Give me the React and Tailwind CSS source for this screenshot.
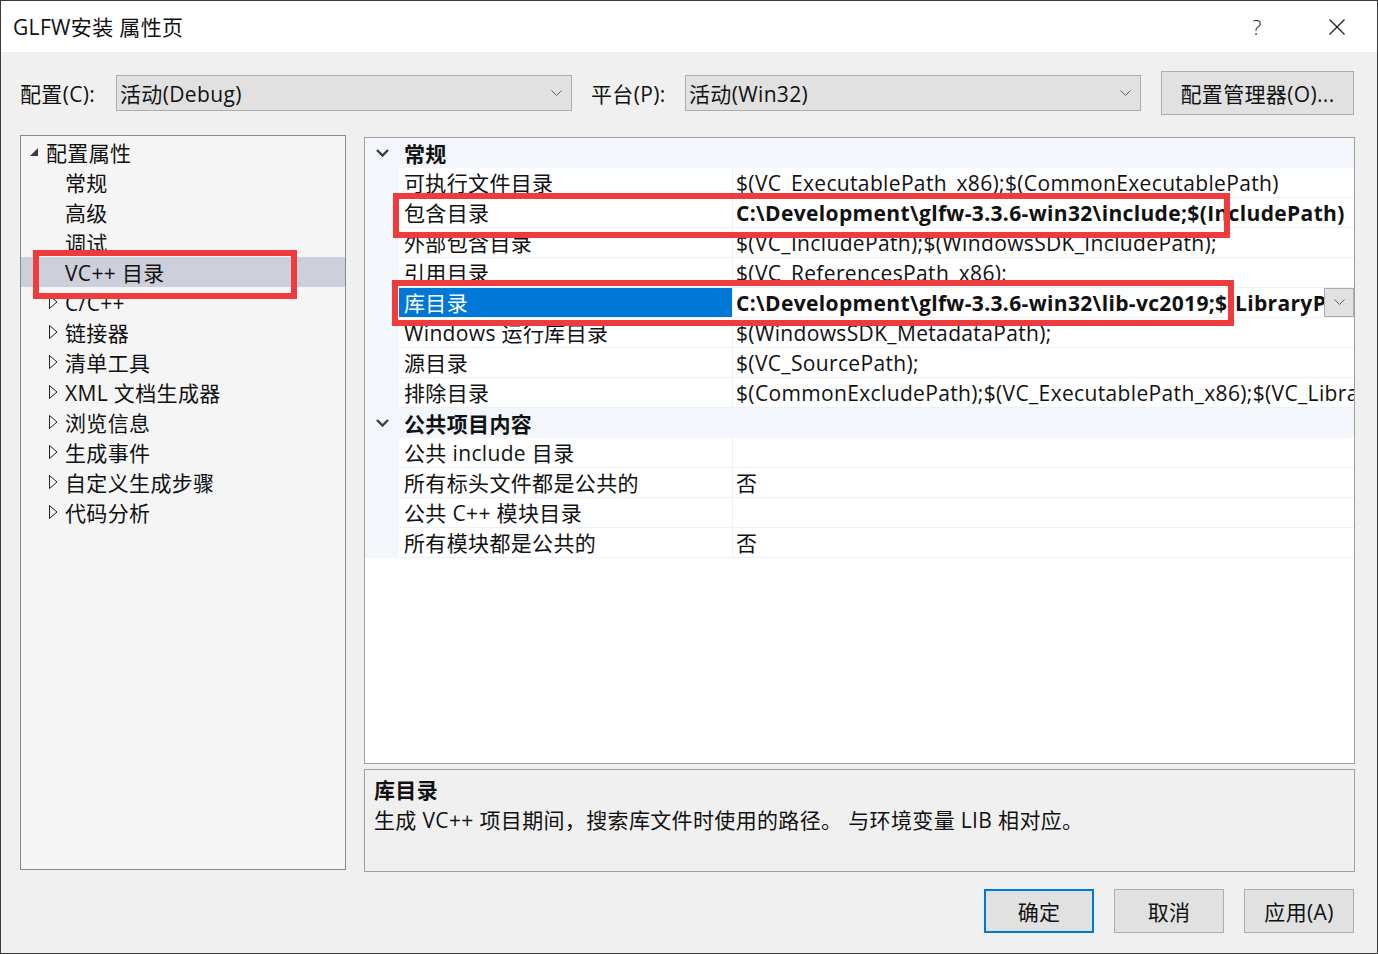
import React from 'react';

const treeItems = [
  { label: '配置属性', level: 0, icon: 'open' },
  { label: '常规', level: 1 },
  { label: '高级', level: 1 },
  { label: '调试', level: 1 },
  { label: 'VC++ 目录', level: 1, selected: true },
  { label: 'C/C++', level: 1, icon: 'closed' },
  { label: '链接器', level: 1, icon: 'closed' },
  { label: '清单工具', level: 1, icon: 'closed' },
  { label: 'XML 文档生成器', level: 1, icon: 'closed' },
  { label: '浏览信息', level: 1, icon: 'closed' },
  { label: '生成事件', level: 1, icon: 'closed' },
  { label: '自定义生成步骤', level: 1, icon: 'closed' },
  { label: '代码分析', level: 1, icon: 'closed' },
];

const sections = [
  {
    title: '常规',
    rows: [
      { name: '可执行文件目录', value: '$(VC_ExecutablePath_x86);$(CommonExecutablePath)' },
      { name: '包含目录', value: 'C:\\Development\\glfw-3.3.6-win32\\include;$(IncludePath)', bold: true },
      { name: '外部包含目录', value: '$(VC_IncludePath);$(WindowsSDK_IncludePath);' },
      { name: '引用目录', value: '$(VC_ReferencesPath_x86);' },
      { name: '库目录', value: 'C:\\Development\\glfw-3.3.6-win32\\lib-vc2019;$(LibraryPath)', bold: true, selected: true },
      { name: 'Windows 运行库目录', value: '$(WindowsSDK_MetadataPath);' },
      { name: '源目录', value: '$(VC_SourcePath);' },
      { name: '排除目录', value: '$(CommonExcludePath);$(VC_ExecutablePath_x86);$(VC_LibraryPath_x86)' },
    ],
  },
  {
    title: '公共项目内容',
    rows: [
      { name: '公共 include 目录', value: '' },
      { name: '所有标头文件都是公共的', value: '否' },
      { name: '公共 C++ 模块目录', value: '' },
      { name: '所有模块都是公共的', value: '否' },
    ],
  },
];

const SmallChevron = () => (
  <svg width="11" height="7" viewBox="0 0 11 7" fill="none" stroke="#606060" strokeWidth="1">
    <polyline points="0.5,0.5 5.5,5.5 10.5,0.5" />
  </svg>
);

const Dropdown = ({ text }) => (
  <div className="w-[456px] h-[36px] flex items-center bg-[#e1e1e1] border border-[#adadad] pl-[3px] pr-[9px]">
    <span className="flex-1 pt-[2px]">{text}</span>
    <SmallChevron />
  </div>
);

const TreeIcon = ({ kind }) => {
  if (kind === 'open') {
    return (
      <svg width="8" height="8" viewBox="0 0 8 8">
        <polygon points="8,0 8,8 0,8" fill="#3c3c3c" />
      </svg>
    );
  }
  if (kind === 'closed') {
    return (
      <svg width="9" height="14" viewBox="0 0 9 14" fill="none" stroke="#1e1e1e" strokeWidth="1">
        <polygon points="0.5,0.5 8,7 0.5,13.5" />
      </svg>
    );
  }
  return <span className="w-[9px]" />;
};

const Button = ({ children, primary }) => (
  <div
    className={
      primary
        ? 'w-[110px] h-[44px] pt-[2px] flex items-center justify-center bg-[#e1e1e1] border-2 border-[#0078d7]'
        : 'w-[110px] h-[44px] pt-[2px] flex items-center justify-center bg-[#e1e1e1] border border-[#adadad]'
    }
  >
    {children}
  </div>
);

export default function App() {
  return (
    <div className="w-[1378px] h-[954px] relative flex flex-col bg-[#f0f0f0] border border-[#3a3a3a] overflow-hidden text-[21px] tracking-[0.35px] leading-[30px] text-[#111] font-['Open_Sans','Noto_Sans_CJK_SC',sans-serif]">
      {/* title bar */}
      <div className="h-[51px] shrink-0 bg-white flex items-center pl-[12px]">
        <span>GLFW安装 属性页</span>
        <div className="ml-auto flex items-center gap-[34px] pr-[17px]">
          <span className="w-[46px] text-center text-[21px] font-light text-[#222]">?</span>
          <span className="w-[46px] flex justify-center">
            <svg width="16" height="16" viewBox="0 0 16 16" stroke="#222" strokeWidth="1.2">
              <line x1="0.5" y1="0.5" x2="15.5" y2="15.5" />
              <line x1="15.5" y1="0.5" x2="0.5" y2="15.5" />
            </svg>
          </span>
        </div>
      </div>

      {/* configuration row */}
      <div className="mt-[19px] h-[44px] shrink-0 flex items-center pl-[19px]">
        <span className="w-[96px] pt-[2px]">配置(C):</span>
        <Dropdown text="活动(Debug)" />
        <span className="ml-[19px] w-[94px] pt-[2px]">平台(P):</span>
        <Dropdown text="活动(Win32)" />
        <div className="ml-[20px] w-[193px] h-[44px] pt-[2px] flex items-center justify-center bg-[#e1e1e1] border border-[#adadad]">
          配置管理器(O)...
        </div>
      </div>

      {/* main area */}
      <div className="mt-[20px] h-[737px] shrink-0 flex pl-[19px]">
        {/* tree */}
        <div className="w-[326px] h-[735px] bg-[#f5f5f5] border border-[#868990] pt-px">
          {treeItems.map((item) => (
            <div
              key={item.label}
              className={
                'h-[30px] flex items-center ' +
                (item.level === 0 ? 'pl-[9px] ' : 'pl-[28px] ') +
                (item.selected ? 'bg-[#cdcfdb]' : '')
              }
            >
              <span className={item.level === 0 ? 'w-[8px] mr-[8px] flex items-center' : 'w-[9px] mr-[7px] flex items-center'}>
                <TreeIcon kind={item.icon} />
              </span>
              <span className="whitespace-nowrap pt-[2px] leading-[28px]">{item.label}</span>
            </div>
          ))}
        </div>

        {/* right column */}
        <div className="ml-[18px] w-[991px] mt-[2px] flex flex-col">
          <div className="h-[627px] bg-white border border-[#a0a0a0] overflow-hidden">
            {sections.map((sec) => (
              <div key={sec.title}>
                <div className="h-[30px] flex items-center bg-[#f3f6fb]">
                  <span className="w-[34px] flex justify-center">
                    <svg width="13" height="8" viewBox="0 0 13 8" fill="none" stroke="#3c3c3c" strokeWidth="2.4">
                      <polyline points="1,1 6.5,6.5 12,1" />
                    </svg>
                  </span>
                  <span className="pl-[5px] pt-[2px] leading-[28px] font-bold">{sec.title}</span>
                </div>
                {sec.rows.map((row) => (
                  <div key={row.name} className="h-[30px] flex">
                    <div className="w-[34px] shrink-0 bg-[#f3f6fb]" />
                    <div
                      className={
                        'w-[333px] shrink-0 pl-[5px] pt-[2px] leading-[27px] whitespace-nowrap overflow-hidden border-b border-[#edf0f5] ' +
                        (row.selected ? 'bg-[#0078d7] text-white' : '')
                      }
                    >
                      {row.name}
                    </div>
                    <div className="w-px shrink-0 bg-[#edf0f5]" />
                    <div className="flex-1 min-w-0 flex border-b border-[#edf0f5]">
                      <span className={'flex-1 min-w-0 pl-[3px] pt-[2px] leading-[27px] whitespace-nowrap overflow-hidden ' + (row.bold ? 'font-bold' : '')}>
                        {row.value}
                      </span>
                      {row.selected && (
                        <span className="w-[30px] shrink-0 flex items-center justify-center bg-[#e1e1e1] border border-[#adadad]">
                          <SmallChevron />
                        </span>
                      )}
                    </div>
                  </div>
                ))}
              </div>
            ))}
          </div>

          {/* description */}
          <div className="mt-[5px] h-[103px] bg-[#f0f0f0] border border-[#a0a0a0] pl-[9px] pt-[5px]">
            <div className="font-bold">库目录</div>
            <div>生成 VC++ 项目期间，搜索库文件时使用的路径。 与环境变量 LIB 相对应。</div>
          </div>
        </div>
      </div>

      {/* buttons */}
      <div className="mt-[17px] flex justify-end gap-[20px] pr-[23px]">
        <Button primary>确定</Button>
        <Button>取消</Button>
        <Button>应用(A)</Button>
      </div>

      {/* red annotation boxes */}
      <div className="absolute left-[32px] top-[249px] w-[264px] h-[49px] border-[6px] border-[#ef3b3b]" />
      <div className="absolute left-[392px] top-[192px] w-[837px] h-[45px] border-[6px] border-[#ef3b3b]" />
      <div className="absolute left-[391px] top-[279px] w-[842px] h-[46px] border-[6px] border-[#ef3b3b]" />
    </div>
  );
}
